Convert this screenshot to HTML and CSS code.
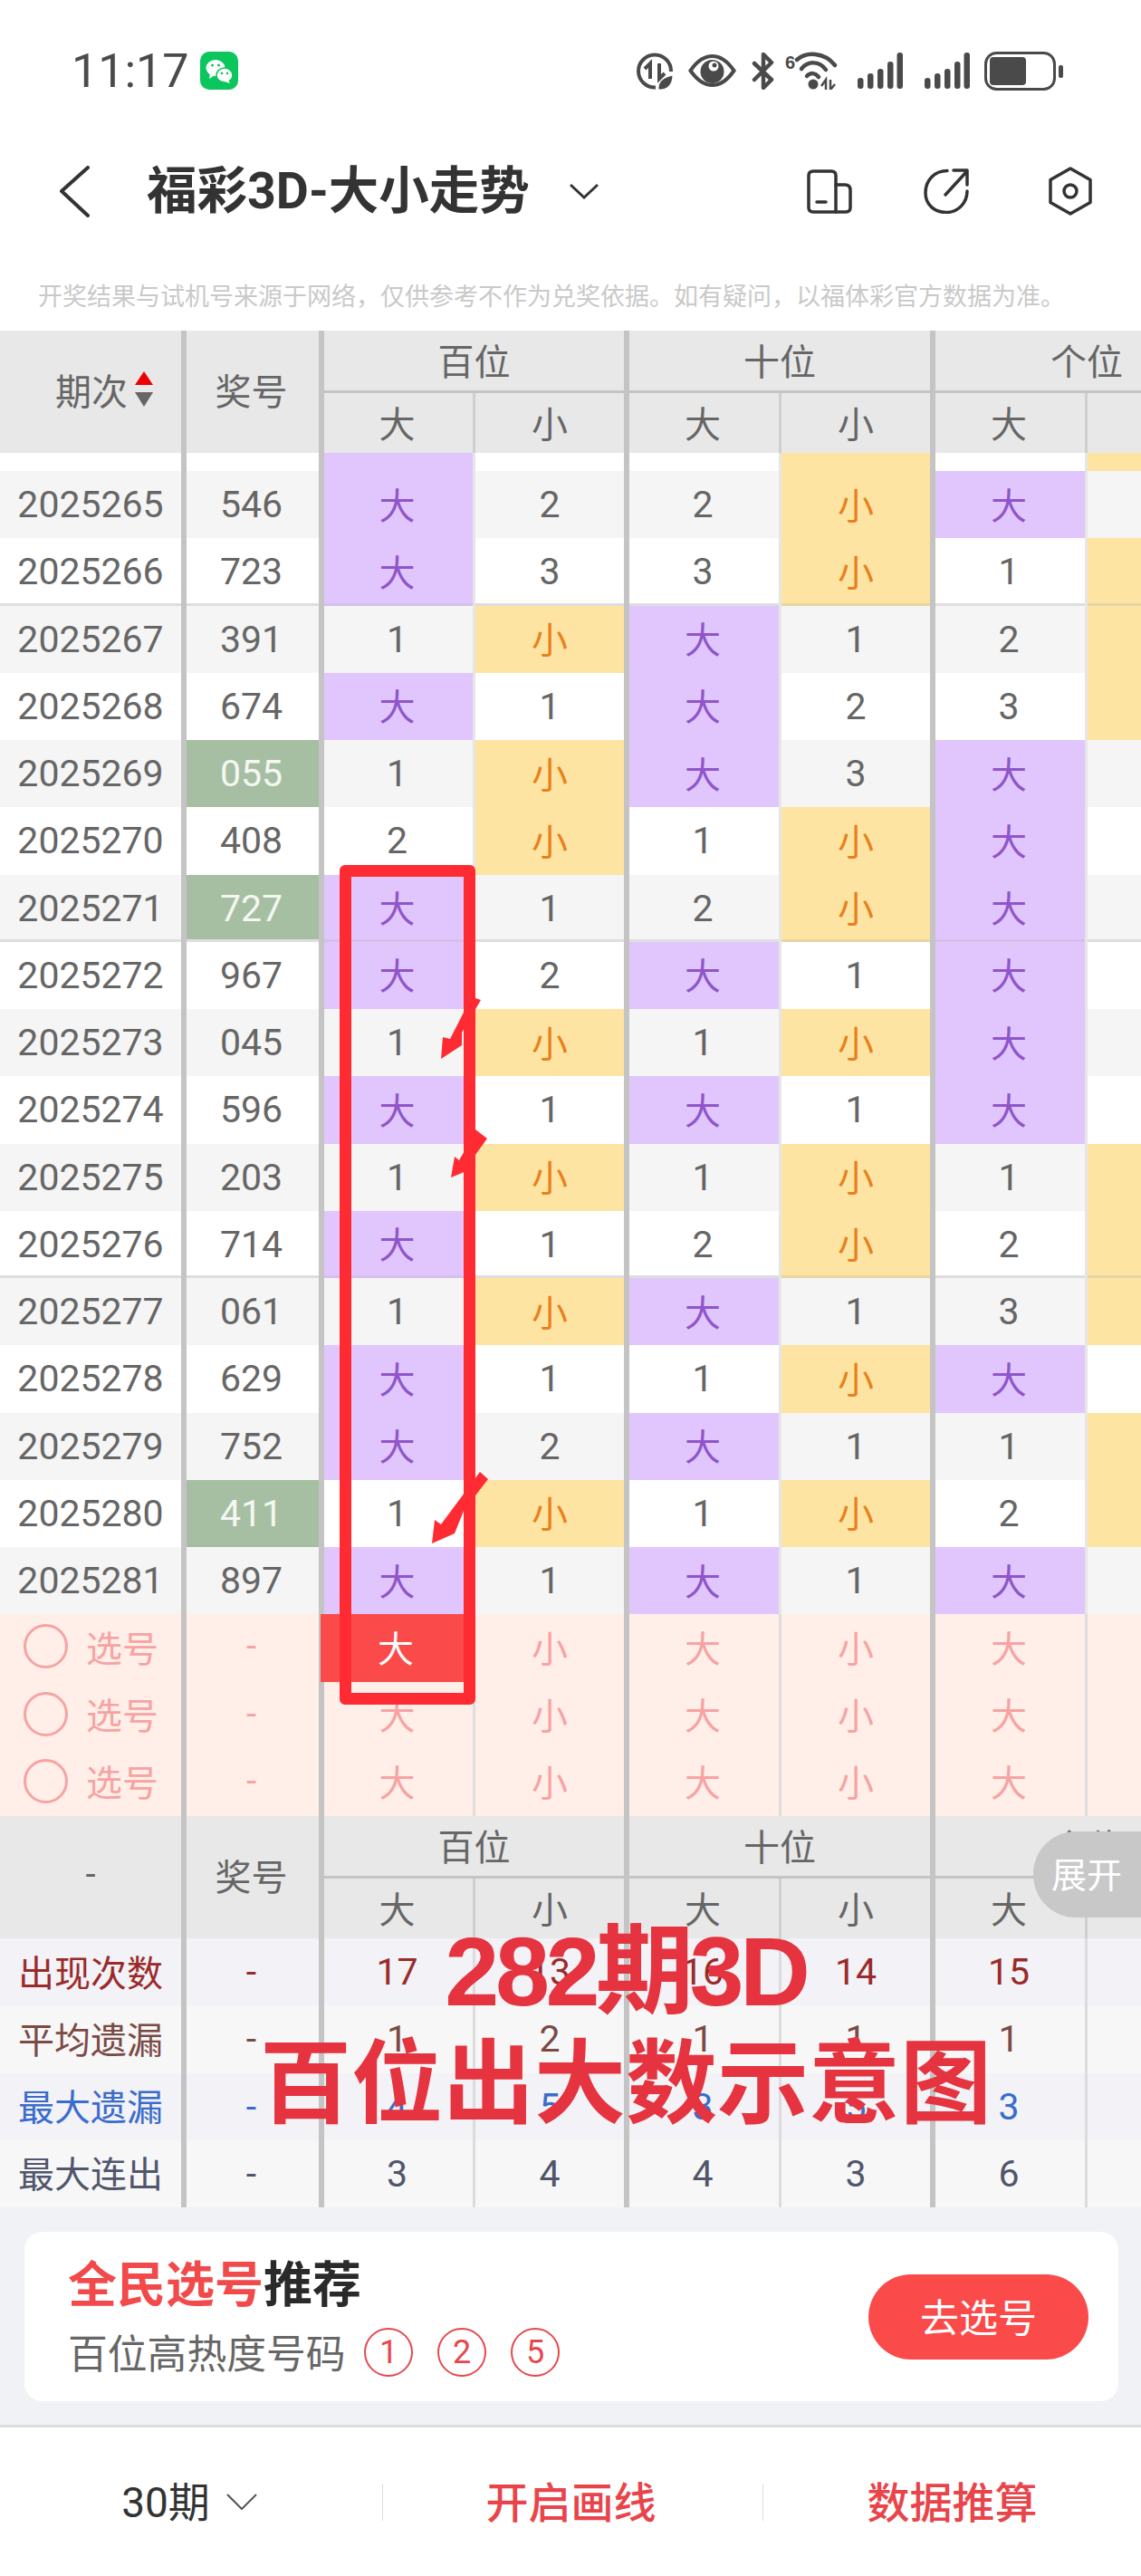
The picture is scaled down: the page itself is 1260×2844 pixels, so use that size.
FILE: index.html
```html
<!DOCTYPE html>
<html lang="zh-CN">

<head>
    <meta charset="UTF-8">
    <title>福彩3D-大小走势</title>
    <link rel="stylesheet" href="styles.css">
</head>

<body>
    <div class="page">
        <!-- status bar -->
        <div class="status">
            <span class="clock">11:17</span>
            <svg class="wechat" viewBox="0 0 42 42" width="42" height="42">
                <rect width="42" height="42" rx="10" fill="#0bc65c" />
                <ellipse cx="17" cy="18" rx="10.5" ry="9" fill="#fff" />
                <path d="M11 24l-1 6 6-4z" fill="#fff" />
                <ellipse cx="27" cy="26" rx="9" ry="8" fill="#fff" stroke="#0bc65c" stroke-width="1.5" />
                <path d="M31 31l2 4-6-2z" fill="#fff" />
                <circle cx="13.5" cy="15" r="1.5" fill="#0bc65c" />
                <circle cx="20.5" cy="15" r="1.5" fill="#0bc65c" />
                <circle cx="24" cy="24" r="1.3" fill="#0bc65c" />
                <circle cx="30" cy="24" r="1.3" fill="#0bc65c" />
            </svg>
            <div class="status-icons">
                <svg class="st-data" viewBox="0 0 40 41" width="40" height="41" fill="none" stroke="#4a4a4a">
                    <path d="M21 38.500A18 18 0 1 1 38 21" stroke-width="4" />
                    <path d="M15 29V12L9 18M25 12V29L31 23" stroke-width="4" />
                    <path d="M24 41C23 32 30 27 40 25C40 35 34 42 24 41Z" fill="#4a4a4a" stroke="#fff" stroke-width="1" />
                </svg>
                <svg class="st-eye" viewBox="0 0 53 36" width="53" height="36">
                    <path d="M2.500 18C10 7 18 2 26.500 2S43 7 50.500 18C43 29 35 34 26.500 34S10 29 2.500 18Z" fill="none" stroke="#4a4a4a" stroke-width="4" />
                    <circle cx="26.500" cy="19" r="13" fill="#4a4a4a" />
                    <circle cx="28" cy="13" r="5.500" fill="#fff" />
                    <circle cx="29" cy="12" r="2.500" fill="#4a4a4a" />
                </svg>
                <svg class="st-bt" viewBox="0 0 25 41" width="25" height="41" fill="none" stroke="#4a4a4a" stroke-width="4.500" stroke-linecap="round" stroke-linejoin="round">
                    <path d="M3 12L22 30L13 39V2L22 11L3 30" />
                </svg>
                <svg class="st-wifi" viewBox="0 0 58 42" width="58" height="42">
                    <text x="0" y="19" class="wifi-six">6</text>
                    <g fill="none" stroke="#4a4a4a" stroke-width="4.500" stroke-linecap="round">
                        <path d="M13 9C23 0 43 0 55 15" />
                        <path d="M18 19C25 10 38 10 45 20" />
                        <path d="M24 27C28 23 33 23 37 28" />
                    </g>
                    <circle cx="31" cy="36" r="5.500" fill="#4a4a4a" />
                    <path d="M40 38l5-7v11M50 31v11l5-6" fill="none" stroke="#4a4a4a" stroke-width="2.500" />
                </svg>
                <svg class="st-signal" viewBox="0 0 50 40" width="50" height="40" fill="#4a4a4a">
                    <rect x="0" y="28" width="6.500" height="12" rx="3" />
                    <rect x="11" y="23" width="6.500" height="17" rx="3" />
                    <rect x="22" y="18" width="6.500" height="22" rx="3" />
                    <rect x="33" y="10" width="6.500" height="30" rx="3" />
                    <rect x="43.500" y="0" width="6.500" height="40" rx="3" />
                </svg>
                <svg class="st-signal two" viewBox="0 0 50 40" width="50" height="40" fill="#4a4a4a">
                    <rect x="0" y="28" width="6.500" height="12" rx="3" />
                    <rect x="11" y="23" width="6.500" height="17" rx="3" />
                    <rect x="22" y="18" width="6.500" height="22" rx="3" />
                    <rect x="33" y="10" width="6.500" height="30" rx="3" />
                    <rect x="43.500" y="0" width="6.500" height="40" rx="3" />
                </svg>
                <svg class="st-battery" viewBox="0 0 87 43" width="87" height="43">
                    <rect x="1.500" y="1.500" width="76" height="40" rx="12" fill="none" stroke="#4a4a4a" stroke-width="3" />
                    <rect x="6" y="6" width="40" height="31" rx="4" fill="#4a4a4a" />
                    <rect x="82" y="15" width="5" height="14" rx="2" fill="#4a4a4a" />
                </svg>
            </div>
        </div>

        <!-- title bar -->
        <div class="nav">
            <svg class="back" viewBox="0 0 34 57" width="34" height="57" fill="none" stroke="#333" stroke-width="4" stroke-linecap="round" stroke-linejoin="round">
                <path d="M32 2L3 28L32 55" />
            </svg>
            <h1 class="title">福彩3D-大小走势</h1>
            <svg class="drop" viewBox="0 0 32 18" width="32" height="18" fill="none" stroke="#333" stroke-width="3">
                <path d="M1 2L16 16L31 2" />
            </svg>
            <div class="nav-icons">
                <svg viewBox="0 0 50 49" width="50" height="49" fill="none" stroke="#333" stroke-width="3.500" stroke-linejoin="round" stroke-linecap="round">
                    <path d="M7 2H27Q32 2 32 7V47H7Q2 47 2 42V7Q2 2 7 2Z" />
                    <path d="M32 17H42Q48 17 48 23V42Q48 47 43 47H32" />
                    <path d="M11 36H21" />
                </svg>
                <svg class="ic-share" viewBox="0 0 50 50" width="50" height="50" fill="none" stroke="#333" stroke-width="3.500" stroke-linecap="round" stroke-linejoin="round">
                    <path d="M26 2.500C12 2.500 2 13 2 27C2 40 12 48.500 25 48.500C38 48.500 48 38 48 25" />
                    <path d="M24 29L47 4M33 2H48V18" />
                </svg>
                <svg class="ic-hex" viewBox="0 0 48 54" width="48" height="54" fill="none" stroke="#333" stroke-width="3.500" stroke-linejoin="round">
                    <path d="M24 2L46 14.500V39.500L24 52L2 39.500V14.500Z" />
                    <circle cx="24" cy="27" r="7" />
                </svg>
            </div>
        </div>

        <p class="notice">开奖结果与试机号来源于网络，仅供参考不作为兑奖依据。如有疑问，以福体彩官方数据为准。</p>

        <!-- top header -->
        <div class="table-head">
            <div class="hcell span period">期次
                <svg class="sort" viewBox="0 0 20 39" width="20" height="39">
                    <path d="M10 0L20 15H0Z" fill="#ee0000" />
                    <path d="M0 23H20L10 39Z" fill="#666" />
                </svg>
            </div>
            <div class="hcell span thick">奖号</div>
            <div class="hcell group thick">百位</div>
            <div class="hcell group thick">十位</div>
            <div class="hcell group thick">个位</div>
            <div class="hcell thick">大</div>
            <div class="hcell thin">小</div>
            <div class="hcell thick">大</div>
            <div class="hcell thin">小</div>
            <div class="hcell thick">大</div>
            <div class="hcell thin">小</div>
        </div>

        <!-- draw rows -->
        <div class="row stub"><div class="cell first"></div><div class="cell thick"></div><div class="cell thick big"></div><div class="cell thin"></div><div class="cell thick"></div><div class="cell thin small"></div><div class="cell thick"></div><div class="cell thin small"></div></div>
        <div class="row alt"><div class="cell first">2025265</div><div class="cell thick">546</div><div class="cell thick big">大</div><div class="cell thin">2</div><div class="cell thick">2</div><div class="cell thin small">小</div><div class="cell thick big">大</div><div class="cell thin">1</div></div>
        <div class="row line"><div class="cell first">2025266</div><div class="cell thick">723</div><div class="cell thick big">大</div><div class="cell thin">3</div><div class="cell thick">3</div><div class="cell thin small">小</div><div class="cell thick">1</div><div class="cell thin small">小</div></div>
        <div class="row alt"><div class="cell first">2025267</div><div class="cell thick">391</div><div class="cell thick">1</div><div class="cell thin small">小</div><div class="cell thick big">大</div><div class="cell thin">1</div><div class="cell thick">2</div><div class="cell thin small">小</div></div>
        <div class="row"><div class="cell first">2025268</div><div class="cell thick">674</div><div class="cell thick big">大</div><div class="cell thin">1</div><div class="cell thick big">大</div><div class="cell thin">2</div><div class="cell thick">3</div><div class="cell thin small">小</div></div>
        <div class="row alt"><div class="cell first">2025269</div><div class="cell thick hit">055</div><div class="cell thick">1</div><div class="cell thin small">小</div><div class="cell thick big">大</div><div class="cell thin">3</div><div class="cell thick big">大</div><div class="cell thin">1</div></div>
        <div class="row"><div class="cell first">2025270</div><div class="cell thick">408</div><div class="cell thick">2</div><div class="cell thin small">小</div><div class="cell thick">1</div><div class="cell thin small">小</div><div class="cell thick big">大</div><div class="cell thin">2</div></div>
        <div class="row alt line"><div class="cell first">2025271</div><div class="cell thick hit">727</div><div class="cell thick big">大</div><div class="cell thin">1</div><div class="cell thick">2</div><div class="cell thin small">小</div><div class="cell thick big">大</div><div class="cell thin">3</div></div>
        <div class="row"><div class="cell first">2025272</div><div class="cell thick">967</div><div class="cell thick big">大</div><div class="cell thin">2</div><div class="cell thick big">大</div><div class="cell thin">1</div><div class="cell thick big">大</div><div class="cell thin">4</div></div>
        <div class="row alt"><div class="cell first">2025273</div><div class="cell thick">045</div><div class="cell thick">1</div><div class="cell thin small">小</div><div class="cell thick">1</div><div class="cell thin small">小</div><div class="cell thick big">大</div><div class="cell thin">5</div></div>
        <div class="row"><div class="cell first">2025274</div><div class="cell thick">596</div><div class="cell thick big">大</div><div class="cell thin">1</div><div class="cell thick big">大</div><div class="cell thin">1</div><div class="cell thick big">大</div><div class="cell thin">6</div></div>
        <div class="row alt"><div class="cell first">2025275</div><div class="cell thick">203</div><div class="cell thick">1</div><div class="cell thin small">小</div><div class="cell thick">1</div><div class="cell thin small">小</div><div class="cell thick">1</div><div class="cell thin small">小</div></div>
        <div class="row line"><div class="cell first">2025276</div><div class="cell thick">714</div><div class="cell thick big">大</div><div class="cell thin">1</div><div class="cell thick">2</div><div class="cell thin small">小</div><div class="cell thick">2</div><div class="cell thin small">小</div></div>
        <div class="row alt"><div class="cell first">2025277</div><div class="cell thick">061</div><div class="cell thick">1</div><div class="cell thin small">小</div><div class="cell thick big">大</div><div class="cell thin">1</div><div class="cell thick">3</div><div class="cell thin small">小</div></div>
        <div class="row"><div class="cell first">2025278</div><div class="cell thick">629</div><div class="cell thick big">大</div><div class="cell thin">1</div><div class="cell thick">1</div><div class="cell thin small">小</div><div class="cell thick big">大</div><div class="cell thin">1</div></div>
        <div class="row alt"><div class="cell first">2025279</div><div class="cell thick">752</div><div class="cell thick big">大</div><div class="cell thin">2</div><div class="cell thick big">大</div><div class="cell thin">1</div><div class="cell thick">1</div><div class="cell thin small">小</div></div>
        <div class="row"><div class="cell first">2025280</div><div class="cell thick hit">411</div><div class="cell thick">1</div><div class="cell thin small">小</div><div class="cell thick">1</div><div class="cell thin small">小</div><div class="cell thick">2</div><div class="cell thin small">小</div></div>
        <div class="row alt"><div class="cell first">2025281</div><div class="cell thick">897</div><div class="cell thick big">大</div><div class="cell thin">1</div><div class="cell thick big">大</div><div class="cell thin">1</div><div class="cell thick big">大</div><div class="cell thin">1</div></div>

        <!-- number picker rows -->
        <div class="row pick"><div class="cell first"><span class="radio"></span>选号</div><div class="cell thick">-</div><div class="cell thick picked">大</div><div class="cell thin">小</div><div class="cell thick">大</div><div class="cell thin">小</div><div class="cell thick">大</div><div class="cell thin">小</div></div>
        <div class="row pick"><div class="cell first"><span class="radio"></span>选号</div><div class="cell thick">-</div><div class="cell thick">大</div><div class="cell thin">小</div><div class="cell thick">大</div><div class="cell thin">小</div><div class="cell thick">大</div><div class="cell thin">小</div></div>
        <div class="row pick"><div class="cell first"><span class="radio"></span>选号</div><div class="cell thick">-</div><div class="cell thick">大</div><div class="cell thin">小</div><div class="cell thick">大</div><div class="cell thin">小</div><div class="cell thick">大</div><div class="cell thin">小</div></div>

        <!-- bottom header -->
        <div class="table-head">
            <div class="hcell span">-</div>
            <div class="hcell span thick">奖号</div>
            <div class="hcell group thick">百位</div>
            <div class="hcell group thick">十位</div>
            <div class="hcell group thick">个位</div>
            <div class="hcell thick">大</div>
            <div class="hcell thin">小</div>
            <div class="hcell thick">大</div>
            <div class="hcell thin">小</div>
            <div class="hcell thick">大</div>
            <div class="hcell thin">小</div>
        </div>

        <!-- stats -->
        <div class="row stat count"><div class="cell first">出现次数</div><div class="cell thick">-</div><div class="cell thick">17</div><div class="cell thin">13</div><div class="cell thick">16</div><div class="cell thin">14</div><div class="cell thick">15</div><div class="cell thin"></div></div>
        <div class="row stat avg"><div class="cell first">平均遗漏</div><div class="cell thick">-</div><div class="cell thick">1</div><div class="cell thin">2</div><div class="cell thick">1</div><div class="cell thin">1</div><div class="cell thick">1</div><div class="cell thin"></div></div>
        <div class="row stat most"><div class="cell first">最大遗漏</div><div class="cell thick">-</div><div class="cell thick">4</div><div class="cell thin">5</div><div class="cell thick">3</div><div class="cell thin">5</div><div class="cell thick">3</div><div class="cell thin"></div></div>
        <div class="row stat run"><div class="cell first">最大连出</div><div class="cell thick">-</div><div class="cell thick">3</div><div class="cell thin">4</div><div class="cell thick">4</div><div class="cell thin">3</div><div class="cell thick">6</div><div class="cell thin"></div></div>

        <!-- recommend card -->
        <div class="recommend">
            <div class="card">
                <div class="card-text">
                    <div class="card-title"><span class="red">全民选号</span>推荐</div>
                    <div class="card-sub">
                        <span class="sub-label">百位高热度号码</span>
                        <span class="ball">1</span>
                        <span class="ball">2</span>
                        <span class="ball">5</span>
                    </div>
                </div>
                <div class="go-btn">去选号</div>
            </div>
        </div>

        <!-- bottom bar -->
        <div class="footer">
            <div class="foot-item periods">30期
                <svg viewBox="0 0 34 18" width="34" height="18" fill="none" stroke="#555" stroke-width="2">
                    <path d="M1 1L17 17L33 1" />
                </svg>
            </div>
            <div class="foot-item action">开启画线</div>
            <div class="foot-item action">数据推算</div>
        </div>

        <!-- things lying over the table -->
        <div class="expand">展开</div>
        <div class="frame"></div>
        <svg class="arrows" viewBox="470 1090 80 630" width="80" height="630" fill="#ff2b33">
            <path d="M525 1102L531 1104L510 1140V1154L487 1169L489 1145L497 1147L515 1112Z" />
            <path d="M525 1247L538 1257L517 1286V1292L498 1300L502 1277L507 1281L518 1262Z" />
            <path d="M530 1625L539 1633L512 1668L502 1693L477 1704L480 1678L487 1683Z" />
        </svg>
        <div class="stamp">
            <div class="stamp-top">282期3D</div>
            <div class="stamp-sub">百位出大数示意图</div>
        </div>
    </div>
</body>

</html>
```

FILE: styles.css
```css
* {
    box-sizing: border-box;
}

body {
    margin: 0;
    background: #fff;
    font-family: Roboto, "Noto Sans CJK SC", sans-serif;
}

.page {
    position: relative;
    width: 1260px;
    height: 2844px;
    overflow: hidden;
}

/* Status bar */
.status {
    display: flex;
    align-items: center;
    height: 156px;
    padding-left: 79px;
}

.clock {
    font-size: 52px;
    color: #4a4a4a;
    width: 142px;
}

.status-icons {
    display: flex;
    align-items: center;
    position: absolute;
    left: 703px;
    top: 56px;
    height: 44px;
}

.st-eye {
    margin-left: 17px;
}

.st-bt {
    margin-left: 17px;
}

.st-wifi {
    margin-left: 12px;
}

.st-signal {
    margin-left: 22px;
}

.st-signal.two {
    margin-left: 24px;
}

.st-battery {
    margin-left: 16px;
}

.wifi-six {
    font-family: "Liberation Sans", sans-serif;
    font-size: 20px;
    font-weight: bold;
    fill: #4a4a4a;
}

/* Title bar */
.nav {
    display: flex;
    align-items: center;
    height: 110px;
    padding-left: 65px;
}

.title {
    margin: 0 0 0 63px;
    padding-top: 2px;
    font-size: 55.500px;
    line-height: 60px;
    font-weight: 700;
    color: #333;
    white-space: nowrap;
}

.drop {
    margin-left: 44px;
    margin-top: -1px;
}

.nav-icons {
    display: flex;
    align-items: center;
    margin-left: auto;
    margin-right: 54px;
}

.ic-share {
    margin-left: 79px;
}

.ic-hex {
    margin-left: 88px;
}

.notice {
    height: 99px;
    margin: 0;
    padding: 45px 0 0 42px;
    font-size: 27px;
    line-height: 34px;
    color: #c9c9c9;
    white-space: nowrap;
}

/* Table */
.table-head {
    display: grid;
    grid-template-columns: 200px 152px 170px 167px 171px 167px 171px 169px;
    grid-template-rows: 69px 66px;
    background: #e8e8e8;
}

.hcell {
    display: flex;
    align-items: center;
    justify-content: center;
    padding-bottom: 3px;
    font-size: 40px;
    color: #666;
    border-left: 0 solid #c4c4c4;
}

.hcell.span {
    grid-row: span 2;
    padding-bottom: 6px;
}

.hcell.group {
    grid-column: span 2;
    border-bottom: 3px solid #c4c4c4;
}

.hcell.thick {
    border-left-width: 6px;
    padding-right: 3px;
}

.hcell.thin {
    border-left-width: 3px;
    border-left-color: #cfcfcf;
}

.hcell.group.thick {
    padding-right: 0;
}

.hcell.period {
    padding-left: 30px;
}

.sort {
    margin-left: 8px;
}

.row {
    display: grid;
    grid-template-columns: 200px 152px 170px 167px 171px 167px 171px 169px;
    height: 74.250px;
    background: #fff;
    font-size: 41px;
    color: #666;
}

.row.alt {
    background: #f5f5f5;
}

.row.stub {
    height: 20px;
}

.row.line .cell {
    box-shadow: inset 0 -3px 0 #dedede;
}

.row.line .cell.big {
    box-shadow: inset 0 -3px 0 #d5c0ea;
}

.row.line .cell.small {
    box-shadow: inset 0 -3px 0 #e8d5a5;
}

.cell {
    display: flex;
    align-items: center;
    justify-content: center;
    background-clip: padding-box;
    border-left: 0 solid #c4c4c4;
}

.cell.thick {
    border-left-width: 6px;
    padding-right: 3px;
}

.cell.thin {
    border-left-width: 3px;
    border-left-color: #e6e6e6;
}

.cell.big {
    padding-bottom: 3px;
    background-color: #e1c6fd;
    color: #8f55c9;
    font-size: 40px;
}

.cell.small {
    padding-bottom: 3px;
    background-color: #fee4a3;
    color: #e8811c;
    font-size: 40px;
}

.cell.hit {
    background-color: #a6bfa2;
    color: #f4f7f2;
}

/* Picker rows */
.row.pick {
    background: #ffefe8;
    color: #f7a3a3;
    font-size: 40px;
}

.row.pick .cell {
    padding-bottom: 3px;
}

.row.pick .cell.thin {
    border-left-color: #ddd;
}

.row.pick .first {
    justify-content: flex-start;
    padding-left: 26px;
}

.radio {
    width: 49px;
    height: 49px;
    margin-right: 20px;
    border: 3px solid #f7a3a3;
    border-radius: 50%;
}

.cell.picked {
    background-color: #fa4a4a;
    color: #fff;
    border-left-width: 2px;
    padding-left: 1px;
}

/* Stat rows */
.row.stat {
    background: #f7f7f7;
}

.row.stat .first {
    padding-bottom: 3px;
    font-size: 40px;
}

.row.stat .cell.thin {
    border-left-color: #dcdcdc;
}

.count,
.most {
    background: #f2f2f7 !important;
}

.count {
    color: #9b2a2a;
}

.avg {
    color: #7a4a45;
}

.most {
    color: #3b6ccc;
}

.run {
    color: #50566c;
}

/* Recommend card */
.recommend {
    height: 240px;
    padding: 27px 25px 0 27px;
    background: #f1f2f6;
}

.card {
    display: flex;
    align-items: flex-start;
    justify-content: space-between;
    height: 187px;
    padding: 31px 33px 0 48px;
    background: #fff;
    border-radius: 20px;
}

.card-title {
    font-size: 54px;
    line-height: 58px;
    font-weight: 700;
    color: #2a2a2a;
}

.red {
    color: #f24a4a;
}

.card-sub {
    display: flex;
    align-items: center;
    margin-top: 13px;
}

.sub-label {
    width: 327px;
    padding-top: 8px;
    font-size: 43.800px;
    line-height: 53px;
    color: #666;
    white-space: nowrap;
}

.ball {
    display: flex;
    align-items: center;
    justify-content: center;
    width: 54px;
    height: 54px;
    margin-right: 27px;
    border: 2px solid #e5484d;
    border-radius: 50%;
    font-size: 36px;
    color: #e5484d;
}

.go-btn {
    display: flex;
    align-items: center;
    justify-content: center;
    width: 243px;
    height: 94px;
    margin-top: 16px;
    padding-bottom: 4px;
    background: #fa4a4a;
    border-radius: 47px;
    font-size: 43px;
    color: #fff;
}

/* Bottom bar */
.footer {
    display: flex;
    align-items: center;
    height: 167px;
    border-top: 3px solid #ddd;
    background: #fff;
}

.foot-item {
    display: flex;
    align-items: center;
    justify-content: center;
    height: 41px;
    padding-bottom: 6px;
    font-size: 47px;
}

.foot-item:nth-child(1) {
    width: 422px;
    padding-right: 4px;
}

.foot-item:nth-child(2) {
    width: 420px;
    padding-right: 4px;
}

.foot-item:nth-child(3) {
    width: 418px;
}

.foot-item + .foot-item {
    border-left: 1px solid #ddd;
}

.periods {
    color: #333;
    font-size: 46px;
}

.periods svg {
    margin-left: 18px;
    margin-top: 6px;
}

.action {
    color: #e8444a;
    font-weight: 500;
}

/* Overlays */
.expand {
    position: absolute;
    top: 2022px;
    right: 0;
    display: flex;
    align-items: center;
    width: 119px;
    height: 95px;
    padding: 0 0 6px 20px;
    background: #c8c8c8;
    border-radius: 47px 0 0 47px;
    font-size: 39px;
    color: #fff;
}

.frame {
    position: absolute;
    left: 375px;
    top: 955px;
    width: 150px;
    height: 927px;
    border: 13.500px solid #ff2b33;
    border-radius: 6px;
}

.arrows {
    position: absolute;
    left: 470px;
    top: 1090px;
}

.stamp {
    position: absolute;
    left: 285px;
    top: 2115px;
    width: 812px;
    font-family: "Liberation Sans", "Noto Sans CJK SC", sans-serif;
    font-weight: 700;
    text-align: center;
    color: #e5333f;
    white-space: nowrap;
}

.stamp-top {
    font-size: 108px;
    line-height: 124px;
    letter-spacing: -4.500px;
}

.stamp-sub {
    font-size: 101px;
    line-height: 124px;
}
```
